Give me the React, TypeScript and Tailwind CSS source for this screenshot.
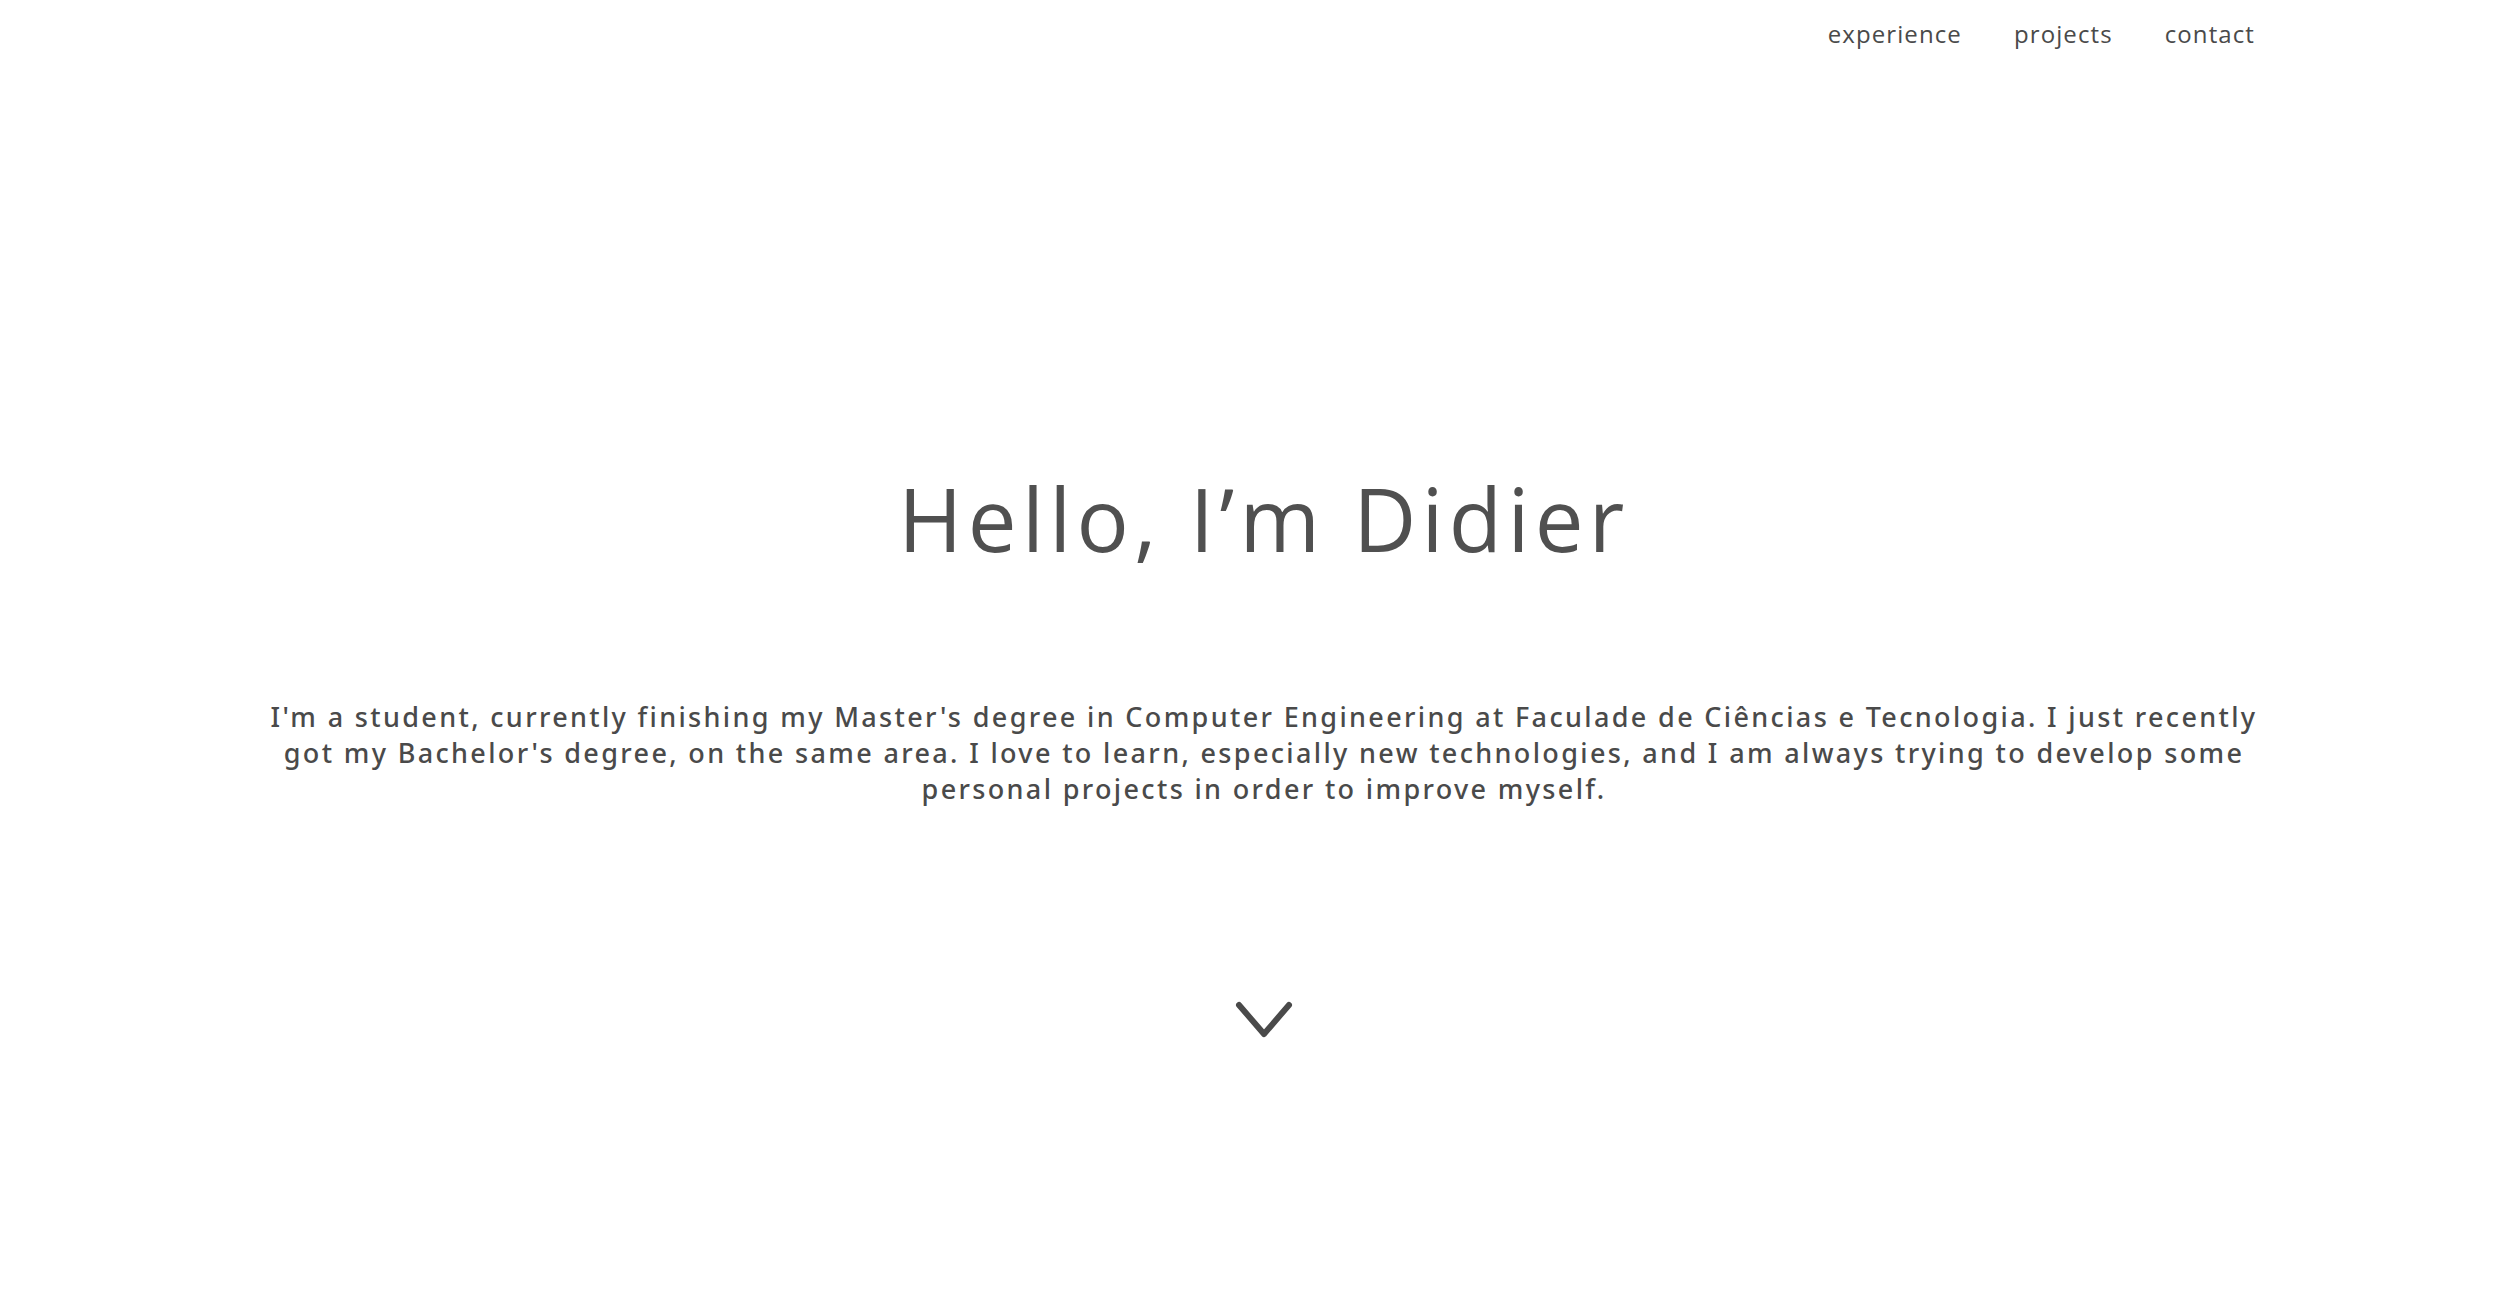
import React from "react";

const links = ["experience", "projects", "contact"];

const App = () => {
  return (
    <div className="min-h-screen bg-white text-[#4a4a4a] font-['Open_Sans',sans-serif]">
      <nav className="flex justify-end pr-[259px] pt-[16px]">
        <ul className="flex gap-[52px] text-[24px] leading-[36px] tracking-[1.1px]">
          {links.map((l) => (
            <li key={l}>
              <a href="#" className="hover:underline">
                {l}
              </a>
            </li>
          ))}
        </ul>
      </nav>

      <main className="flex flex-col items-center pl-[14px]">
        <h1 className="mt-[416px] text-[87px] leading-[100px] font-normal tracking-[5.3px] text-[#505050]">
          Hello, I’m Didier
        </h1>
        <p className="mt-[131px] w-[2030px] text-center font-['Noto_Sans',sans-serif] text-[27px] leading-[36px] font-medium tracking-[2.35px]">
          I'm a student, currently finishing my Master's degree in Computer
          Engineering at Faculade de Ciências e Tecnologia. I just recently got
          my Bachelor's degree, on the same area. I love to learn, especially
          new technologies, and I am always trying to develop some personal
          projects in order to improve myself.
        </p>
        <button className="mt-[194px]" aria-label="scroll down">
          <svg width="58" height="38" viewBox="0 0 58 38" fill="none">
            <path
              d="M4 4 L29 33 L54 4"
              stroke="#4a4a4a"
              strokeWidth="6"
              strokeLinecap="round"
              strokeLinejoin="round"
            />
          </svg>
        </button>
      </main>
    </div>
  );
};

export default App;
